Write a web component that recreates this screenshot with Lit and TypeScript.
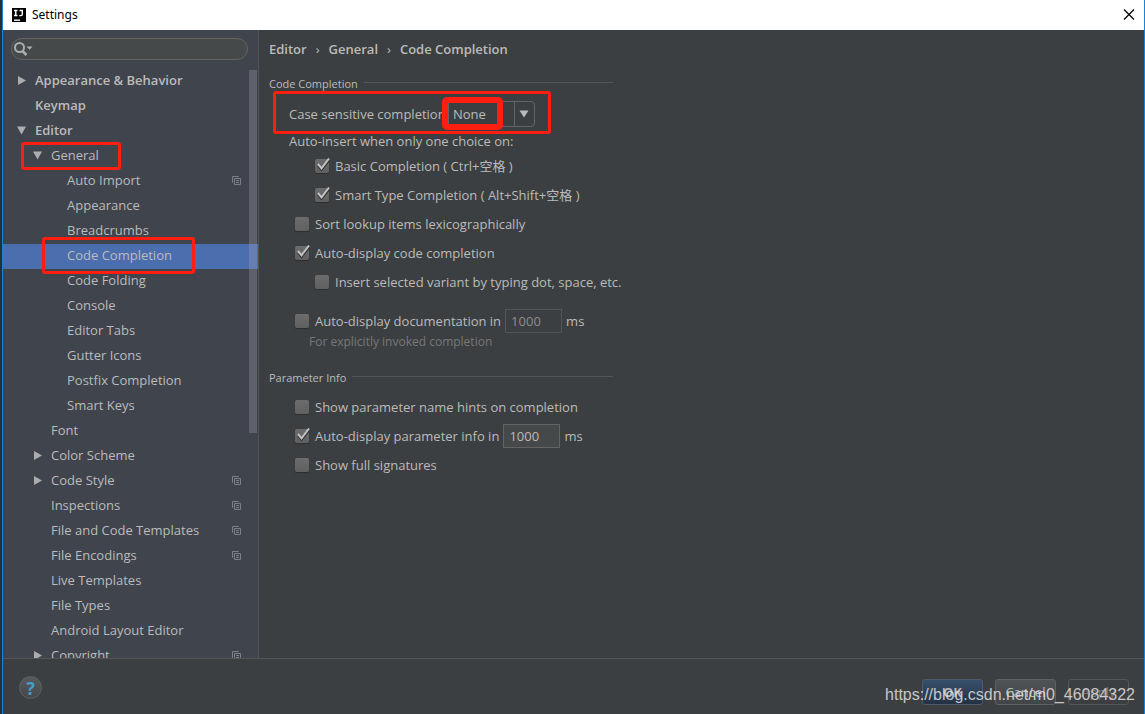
import { LitElement, html, css, svg, nothing } from "lit";
import { customElement, property, state } from "lit/decorators.js";

interface TreeNode {
  label: string;
  level: number;
  arrow?: "open" | "closed";
  project?: boolean;
  mark?: string;
}

const NODES: TreeNode[] = [
  { label: "Appearance & Behavior", level: 0, arrow: "closed" },
  { label: "Keymap", level: 0 },
  { label: "Editor", level: 0, arrow: "open" },
  { label: "General", level: 1, arrow: "open", mark: "mark-general" },
  { label: "Auto Import", level: 2, project: true },
  { label: "Appearance", level: 2 },
  { label: "Breadcrumbs", level: 2 },
  { label: "Code Completion", level: 2, mark: "mark-completion" },
  { label: "Code Folding", level: 2 },
  { label: "Console", level: 2 },
  { label: "Editor Tabs", level: 2 },
  { label: "Gutter Icons", level: 2 },
  { label: "Postfix Completion", level: 2 },
  { label: "Smart Keys", level: 2 },
  { label: "Font", level: 1 },
  { label: "Color Scheme", level: 1, arrow: "closed" },
  { label: "Code Style", level: 1, arrow: "closed", project: true },
  { label: "Inspections", level: 1, project: true },
  { label: "File and Code Templates", level: 1, project: true },
  { label: "File Encodings", level: 1, project: true },
  { label: "Live Templates", level: 1 },
  { label: "File Types", level: 1 },
  { label: "Android Layout Editor", level: 1 },
  { label: "Copyright", level: 1, arrow: "closed", project: true },
];

const FONT = css`"Open Sans", "Noto Sans CJK SC", sans-serif`;

@customElement("settings-tree")
class SettingsTree extends LitElement {
  @state() private selected = "Code Completion";

  static styles = css`
    :host {
      display: flex;
      flex-direction: column;
      position: relative;
      box-sizing: border-box;
      width: 256px;
      flex: none;
      background: #40444d;
      border-right: 1px solid #535353;
      font: 13px/22px ${FONT};
      color: #bbbbbb;
    }
    .search {
      display: flex;
      align-items: center;
      gap: 4px;
      margin: 8px 10px 9px 8px;
      height: 22px;
      box-sizing: border-box;
      border: 1px solid #646464;
      border-radius: 11px;
      background: #45494a;
      padding: 0 8px 0 2px;
    }
    .search svg {
      flex: none;
    }
    .search input {
      flex: 1;
      min-width: 0;
      border: 0;
      outline: 0;
      padding: 0;
      background: none;
      color: inherit;
      font: inherit;
      line-height: 18px;
    }
    .list {
      list-style: none;
      margin: 0;
      padding: 0;
      flex: 1;
      min-height: 0;
      overflow: hidden;
    }
    .item {
      position: relative;
    }
    .row {
      display: flex;
      align-items: center;
      box-sizing: border-box;
      height: 25px;
      padding: 0 16px 3px 0;
      color: inherit;
      text-decoration: none;
      white-space: nowrap;
    }
    .level0 {
      padding-left: 14px;
      font-weight: 600;
    }
    .level1 {
      padding-left: 30px;
    }
    .level2 {
      padding-left: 46px;
    }
    .selected {
      background: #4b6eaf;
    }
    .arrow {
      width: 18px;
      height: 10px;
      flex: none;
    }
    .label {
      flex: 1;
    }
    .mark {
      position: absolute;
      z-index: 1;
      box-sizing: border-box;
      border: 3px solid #ff1e10;
      border-radius: 3px;
      pointer-events: none;
    }
    .mark-general {
      left: 18px;
      top: -2px;
      width: 100px;
      height: 28px;
    }
    .mark-completion {
      left: 39px;
      top: -7px;
      width: 153px;
      height: 37px;
    }
    .thumb {
      position: absolute;
      right: 1px;
      top: 40px;
      width: 8px;
      height: 363px;
      background: rgba(166, 166, 178, 0.3);
    }
  `;

  private arrow(kind?: string) {
    return html`<svg class="arrow" viewBox="0 0 18 10" aria-hidden="true">
      ${kind === "closed"
        ? svg`<path d="M1 1 L9 5.5 L1 10 Z" fill="#adadad" />`
        : kind === "open"
          ? svg`<path d="M0 1.5 L9 1.5 L4.5 9.5 Z" fill="#adadad" />`
          : nothing}
    </svg>`;
  }

  private pick(e: Event, label: string) {
    e.preventDefault();
    this.selected = label;
  }

  render() {
    return html`
      <div class="search">
        <svg width="20" height="16" viewBox="0 0 20 16" aria-hidden="true">
          <circle cx="5.5" cy="6.5" r="4.5" fill="none" stroke="#adadad" stroke-width="2" />
          <path d="M8.5 10 L12.4 14" stroke="#adadad" stroke-width="2.6" />
          <path d="M12.5 5.5 H18.5 L15.5 8.8 Z" fill="#adadad" />
        </svg>
        <input type="text" aria-label="Search settings" />
      </div>
      <ul class="list">
        ${NODES.map(
          (n) => html`<li class="item">
            <a
              href="#"
              class="row level${n.level} ${n.label === this.selected ? "selected" : ""}"
              @click=${(e: Event) => this.pick(e, n.label)}
            >
              ${this.arrow(n.arrow)}
              <span class="label">${n.label}</span>
              ${n.project
                ? html`<svg width="11" height="11" viewBox="0 0 11 11" aria-hidden="true">
                    <path d="M2 7.5 H1.5 V1.5 H7.5 V2" fill="none" stroke="#7d8085" />
                    <path d="M3.5 3.5 H9.5 V9.5 H3.5 Z M5 5.5 H8 M5 7.5 H8" fill="none" stroke="#7d8085" />
                  </svg>`
                : nothing}
            </a>
            ${n.mark ? html`<span class="mark ${n.mark}"></span>` : nothing}
          </li>`,
        )}
      </ul>
      <div class="thumb"></div>
    `;
  }
}

@customElement("check-option")
class CheckOption extends LitElement {
  @property() label = "";
  @property({ type: Boolean }) checked = false;

  static styles = css`
    :host {
      display: block;
    }
    .option {
      display: flex;
      align-items: center;
      gap: 6px;
      white-space: nowrap;
    }
    .box {
      position: relative;
      display: flex;
      width: 14px;
      height: 14px;
      flex: none;
    }
    .input {
      appearance: none;
      margin: 0;
      width: 14px;
      height: 14px;
      border-radius: 2px;
      background: linear-gradient(#6c6c6c, #606060);
      box-shadow: 0 1px 1px #2c2e2f;
    }
    .tick {
      position: absolute;
      left: 0;
      top: -2px;
      display: none;
      pointer-events: none;
    }
    .input:checked + .tick {
      display: block;
    }
  `;

  render() {
    return html`<label class="option">
      <span class="box">
        <input class="input" type="checkbox" .checked=${this.checked} />
        <svg class="tick" width="15" height="16" viewBox="0 0 15 16" aria-hidden="true">
          <path d="M3 8.5 L6.5 12.8 L14 3.5" fill="none" stroke="#333" stroke-width="2.2" />
          <path d="M3 7 L6.5 11.3 L14 1.5" fill="none" stroke="#c4c4c4" stroke-width="2" />
        </svg>
      </span>
      <span>${this.label}</span>
    </label>`;
  }
}

@customElement("completion-page")
class CompletionPage extends LitElement {
  static styles = css`
    :host {
      display: block;
      flex: 1;
      min-width: 0;
      box-sizing: border-box;
      padding: 0 10px;
      font: 13px/20px ${FONT};
      color: #bbbbbb;
    }
    .crumbs {
      display: flex;
      gap: 9px;
      padding: 9px 0 15px;
      font-weight: 600;
    }
    .sep {
      font-weight: 400;
    }
    .group {
      max-width: 344px;
      margin: 0 0 19px;
    }
    .title {
      display: flex;
      align-items: center;
      gap: 6px;
      margin: 0;
      font-size: 11px;
      font-weight: 400;
      line-height: 20px;
    }
    .title::after {
      content: "";
      flex: 1;
      height: 1px;
      margin-bottom: 4px;
      background: #555555;
    }
    .case {
      position: relative;
      display: flex;
      align-items: center;
      height: 26px;
      margin: 7px 0 4px;
      padding-left: 20px;
    }
    .case label {
      width: 155px;
      white-space: nowrap;
    }
    .combo {
      appearance: none;
      box-sizing: border-box;
      width: 91px;
      height: 26px;
      padding: 0 24px 0 8px;
      border: 1px solid #646464;
      border-radius: 4px;
      color: inherit;
      font: inherit;
      background:
        linear-gradient(#646464, #646464) right 19px top / 1px 100% no-repeat,
        linear-gradient(#646464, #646464) left 3px top / 1px 100% no-repeat,
        #3c3f41;
    }
    .caret {
      position: absolute;
      left: 250px;
      top: 9px;
      pointer-events: none;
    }
    .mark {
      position: absolute;
      box-sizing: border-box;
      border: 3px solid #ff1e10;
      border-radius: 3px;
      pointer-events: none;
    }
    .mark-row {
      left: 4px;
      top: -10px;
      width: 278px;
      height: 43px;
    }
    .mark-value {
      left: 173px;
      top: -4px;
      width: 61px;
      height: 33px;
      border-width: 6px;
      border-radius: 5px;
    }
    .note {
      margin: 0;
      padding-left: 20px;
    }
    .line {
      display: flex;
      align-items: center;
      gap: 4px;
      height: 29px;
      padding-left: 26px;
    }
    .deep {
      padding-left: 46px;
    }
    .spaced {
      margin-top: 10px;
    }
    .timed {
      min-width: 204px;
    }
    .number {
      box-sizing: border-box;
      width: 57px;
      height: 24px;
      padding: 0 5px;
      border: 1px solid #646464;
      background: #45494a;
      color: inherit;
      font: inherit;
    }
    .number:disabled {
      border-color: #555555;
      background: #3c3f41;
      color: #8c8c8c;
    }
    .hint {
      margin: 0;
      padding-left: 40px;
      font-size: 12px;
      line-height: 14px;
      color: #777777;
    }
    .rows {
      padding-top: 4px;
    }
  `;

  render() {
    return html`
      <nav class="crumbs" aria-label="Breadcrumb">
        <span>Editor</span><span class="sep">›</span><span>General</span><span class="sep">›</span
        ><span>Code Completion</span>
      </nav>
      <section class="group">
        <h2 class="title">Code Completion</h2>
        <div class="case">
          <label for="case">Case sensitive completion</label>
          <select id="case" class="combo">
            <option>None</option>
            <option>All</option>
            <option>First letter</option>
          </select>
          <svg class="caret" width="10" height="8" viewBox="0 0 10 8" aria-hidden="true">
            <path d="M0.5 0.5 H9.5 L5 7.5 Z" fill="#bbbbbb" />
          </svg>
          <span class="mark mark-row"></span>
          <span class="mark mark-value"></span>
        </div>
        <p class="note">Auto-insert when only one choice on:</p>
        <div class="line deep"><check-option checked label="Basic Completion ( Ctrl+空格 )"></check-option></div>
        <div class="line deep"><check-option checked label="Smart Type Completion ( Alt+Shift+空格 )"></check-option></div>
        <div class="line"><check-option label="Sort lookup items lexicographically"></check-option></div>
        <div class="line"><check-option checked label="Auto-display code completion"></check-option></div>
        <div class="line deep"><check-option label="Insert selected variant by typing dot, space, etc."></check-option></div>
        <div class="line spaced">
          <check-option class="timed" label="Auto-display documentation in"></check-option>
          <input class="number" type="text" value="1000" disabled aria-label="Documentation delay" />
          <span>ms</span>
        </div>
        <p class="hint">For explicitly invoked completion</p>
      </section>
      <section class="group">
        <h2 class="title">Parameter Info</h2>
        <div class="rows">
          <div class="line"><check-option label="Show parameter name hints on completion"></check-option></div>
          <div class="line">
            <check-option class="timed" checked label="Auto-display parameter info in"></check-option>
            <input class="number" type="text" value="1000" aria-label="Parameter info delay" />
            <span>ms</span>
          </div>
          <div class="line"><check-option label="Show full signatures"></check-option></div>
        </div>
      </section>
    `;
  }
}

@customElement("app-root")
class AppRoot extends LitElement {
  static styles = css`
    :host {
      display: flex;
      flex-direction: column;
      position: relative;
      box-sizing: border-box;
      height: 100vh;
      overflow: hidden;
      padding-left: 2px;
      background: #2b2d30;
      font: 13px/20px ${FONT};
      color: #bbbbbb;
    }
    .window {
      display: flex;
      flex-direction: column;
      flex: 1;
      min-height: 0;
      border: solid #1883d7;
      border-width: 0 1px;
      background: #3c3f41;
    }
    .bar {
      display: flex;
      align-items: center;
      height: 30px;
      flex: none;
      gap: 6px;
      padding: 0 9px;
      background: #ffffff;
      color: #000000;
      font-family: "Noto Sans", sans-serif;
      font-size: 12px;
    }
    .name {
      flex: 1;
    }
    .close {
      display: flex;
      border: 0;
      padding: 0;
      background: none;
    }
    .main {
      display: flex;
      flex: 1;
      min-height: 0;
    }
    .footer {
      display: flex;
      align-items: center;
      gap: 12px;
      height: 56px;
      flex: none;
      box-sizing: border-box;
      padding: 2px 15px 0 16px;
      border-top: 1px solid #555555;
    }
    .help {
      width: 23px;
      height: 23px;
      margin-right: auto;
      padding: 0;
      border: 1px solid #5e6162;
      border-radius: 50%;
      background: linear-gradient(#555a5c, #45494a);
      color: #4a9cc9;
      font: 700 18px/20px "Noto Sans", sans-serif;
    }
    .button {
      width: 61px;
      height: 26px;
      margin-top: 8px;
      padding: 0;
      border: 1px solid #5e6162;
      border-radius: 3px;
      background: linear-gradient(#4f5355, #414547);
      color: #bbbbbb;
      font: inherit;
    }
    .primary {
      border-color: #4c5a6b;
      background: linear-gradient(#384f6b, #233144);
      font-weight: 700;
    }
    .button:disabled {
      background: none;
      border-color: #55585a;
      color: #777777;
    }
    .credit {
      position: absolute;
      right: 10px;
      bottom: 9px;
      font: 16px/20px "Liberation Sans", sans-serif;
      color: rgba(225, 225, 225, 0.85);
    }
  `;

  render() {
    return html`
      <div class="window">
        <header class="bar">
          <svg width="14" height="14" viewBox="0 0 14 14" aria-hidden="true">
            <rect width="14" height="14" fill="#000" />
            <path
              d="M2 2.5 H5.5 M3.75 2.5 V7.5 M2 7.5 H5.5 M7.5 2.5 H11 M10.3 2.5 V6.3 Q10.3 7.6 9 7.6 H7.3"
              fill="none"
              stroke="#fff"
              stroke-width="1.4"
            />
            <path d="M2 12.2 H8" stroke="#fff" stroke-width="1.4" />
          </svg>
          <span class="name">Settings</span>
          <button class="close" aria-label="Close">
            <svg width="12" height="12" viewBox="0 0 12 12" aria-hidden="true">
              <path d="M1 0.5 L11 10.5 M11 0.5 L1 10.5" stroke="#000" stroke-width="1.2" />
            </svg>
          </button>
        </header>
        <div class="main">
          <settings-tree></settings-tree>
          <completion-page></completion-page>
        </div>
        <footer class="footer">
          <button class="help" aria-label="Help">?</button>
          <button class="button primary">OK</button>
          <button class="button">Cancel</button>
          <button class="button" disabled>Apply</button>
        </footer>
      </div>
      <div class="credit">https://blog.csdn.net/m0_46084322</div>
    `;
  }
}
